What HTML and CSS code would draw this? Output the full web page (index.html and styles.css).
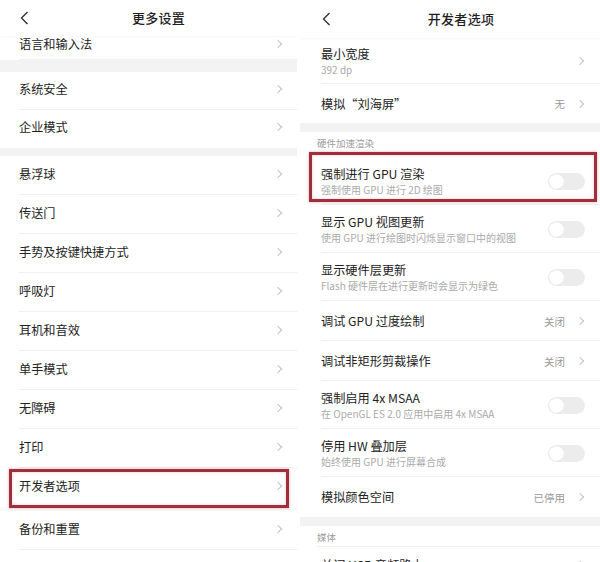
FILE: index.html
```html
<!DOCTYPE html>
<html lang="zh-CN">
<head>
<meta charset="utf-8">
<title>设置</title>
<link rel="stylesheet" href="styles.css">
</head>
<body>
<div class="screens">
  <section class="panel panel-left">
    <header class="bar">
      <svg class="back" width="9" height="14" viewBox="0 0 9 14"><path d="M7.5 1 L1.5 7 L7.5 13" fill="none" stroke="#333" stroke-width="1.4"/></svg>
      <h1 class="bar-title">更多设置</h1>
    </header>
    <div class="row row-partial"><span class="t">语言和输入法</span><i class="chev"></i></div>
    <div class="band band-12"></div>
    <div class="row row-38"><span class="t">系统安全</span><i class="chev"></i></div>
    <div class="row row-38 row-last"><span class="t">企业模式</span><i class="chev"></i></div>
    <div class="band band-8"></div>
    <div class="row"><span class="t">悬浮球</span><i class="chev"></i></div>
    <div class="row"><span class="t">传送门</span><i class="chev"></i></div>
    <div class="row"><span class="t">手势及按键快捷方式</span><i class="chev"></i></div>
    <div class="row"><span class="t">呼吸灯</span><i class="chev"></i></div>
    <div class="row"><span class="t">耳机和音效</span><i class="chev"></i></div>
    <div class="row"><span class="t">单手模式</span><i class="chev"></i></div>
    <div class="row"><span class="t">无障碍</span><i class="chev"></i></div>
    <div class="row"><span class="t">打印</span><i class="chev"></i></div>
    <div class="row row-last mark mark-left"><span class="t">开发者选项</span><i class="chev"></i></div>
    <div class="band band-4"></div>
    <div class="row"><span class="t">备份和重置</span><i class="chev"></i></div>
  </section>

  <section class="panel panel-right">
    <header class="bar bar-r">
      <svg class="back" width="9" height="14" viewBox="0 0 9 14"><path d="M7.5 1 L1.5 7 L7.5 13" fill="none" stroke="#333" stroke-width="1.4"/></svg>
      <h1 class="bar-title">开发者选项</h1>
    </header>
    <div class="row row-r row-46"><div class="stack"><span class="t">最小宽度</span><span class="s">392 dp</span></div><i class="chev"></i></div>
    <div class="row row-r row-39 row-last"><span class="t">模拟“刘海屏”</span><span class="val">无</span><i class="chev"></i></div>
    <div class="band band-9"></div>
    <div class="section section-top">硬件加速渲染</div>
    <div class="row row-r row-48 mark mark-right"><div class="stack"><span class="t">强制进行 GPU 渲染</span><span class="s">强制使用 GPU 进行 2D 绘图</span></div><span class="switch"></span></div>
    <div class="row row-r row-48"><div class="stack"><span class="t">显示 GPU 视图更新</span><span class="s">使用 GPU 进行绘图时闪烁显示窗口中的视图</span></div><span class="switch"></span></div>
    <div class="row row-r row-48"><div class="stack"><span class="t">显示硬件层更新</span><span class="s">Flash 硬件层在进行更新时会显示为绿色</span></div><span class="switch"></span></div>
    <div class="row row-r row-40"><span class="t">调试 GPU 过度绘制</span><span class="val">关闭</span><i class="chev"></i></div>
    <div class="row row-r row-40"><span class="t">调试非矩形剪裁操作</span><span class="val">关闭</span><i class="chev"></i></div>
    <div class="row row-r row-48"><div class="stack"><span class="t">强制启用 4x MSAA</span><span class="s">在 OpenGL ES 2.0 应用中启用 4x MSAA</span></div><span class="switch"></span></div>
    <div class="row row-r row-48"><div class="stack"><span class="t">停用 HW 叠加层</span><span class="s">始终使用 GPU 进行屏幕合成</span></div><span class="switch"></span></div>
    <div class="row row-r row-40 row-last"><span class="t">模拟颜色空间</span><span class="val">已停用</span><i class="chev"></i></div>
    <div class="band band-9"></div>
    <div class="section section-media">媒体</div>
    <div class="row row-r row-cut"><span class="t">关闭 USB 音频路由</span><i class="chev"></i></div>
  </section>
</div>
</body>
</html>
```

FILE: styles.css
```css
* { box-sizing: border-box; margin: 0; padding: 0; }

html, body {
  width: 600px;
  height: 562px;
  overflow: hidden;
  background: #ffffff;
}

body {
  font-family: "Noto Sans CJK SC", "Noto Sans", sans-serif;
  color: #222;
}

.screens {
  display: flex;
  gap: 3px;
  height: 562px;
}

.panel {
  display: flex;
  flex-direction: column;
  background: #fff;
  overflow: hidden;
}

.panel-left { width: 297px; flex: none; }
.panel-right { flex: 1; }

.bar {
  height: 36px;
  flex: none;
  display: grid;
  grid-template-columns: 1fr auto 1fr;
  align-items: center;
  padding: 0 0 0 20px;
  box-shadow: 0 1px 2px rgba(0,0,0,0.03);
  position: relative;
  z-index: 1;
}
.bar-r { height: 38px; padding-left: 22px; }

.back { grid-column: 1; justify-self: start; }

.bar-title {
  grid-column: 2;
  font-size: 13px;
  font-weight: 500;
  color: #1e1e1e;
  letter-spacing: 0.3px;
  line-height: 18px;
}

.row {
  flex: none;
  height: 39px;
  display: flex;
  align-items: center;
  padding: 0 14px 4px 19px;
  position: relative;
}
.row::before {
  content: "";
  position: absolute;
  left: 19px;
  right: 0;
  bottom: 0;
  height: 1px;
  background: #f0f0f0;
}
.row-last::before { display: none; }

.row-38 { height: 38px; }
.row-partial { height: 24px; padding-bottom: 8px; }

.row-r { padding: 0 15px 0 21px; }
.row-r::before { left: 21px; }
.row-46 { height: 46px; padding-bottom: 1px; }
.row-39 { height: 39px; }
.row-40 { height: 40px; }
.row-48 { height: 48px; }
.row-cut { height: 36px; }

.t {
  font-size: 12.2px;
  line-height: 16px;
  color: #222;
  flex: 1;
  white-space: nowrap;
}

.stack {
  flex: 1;
  display: flex;
  flex-direction: column;
  gap: 1px;
}
.stack .t { flex: none; }

.s {
  font-size: 10px;
  line-height: 13px;
  color: #aaa;
  white-space: nowrap;
}

.val {
  font-size: 10.5px;
  color: #9a9a9a;
  margin-right: 12px;
}

.chev {
  width: 6px;
  height: 6px;
  border-top: 1.2px solid #c4c4c4;
  border-right: 1.2px solid #c4c4c4;
  transform: rotate(45deg);
  margin-right: 2px;
  flex: none;
}

.switch {
  width: 37px;
  height: 17px;
  border-radius: 9px;
  background: #ececec;
  position: relative;
  flex: none;
}
.switch::after {
  content: "";
  position: absolute;
  left: 1px;
  top: 1px;
  width: 15px;
  height: 15px;
  border-radius: 50%;
  background: #fff;
  box-shadow: 0 0 1px rgba(0,0,0,0.12);
}

.band {
  flex: none;
  background: #f3f3f3;
}
.band-12 { height: 12px; }
.band-9 { height: 9px; }
.band-8 { height: 8px; }
.band-4 { height: 4px; background: #fafafa; }

.section {
  flex: none;
  font-size: 9.5px;
  color: #9d9d9d;
  padding-left: 17px;
  display: flex;
  align-items: center;
  position: relative;
}
.section-top { height: 25px; padding-bottom: 4px; }
.section-media { height: 21px; }
.section-media::after {
  content: "";
  position: absolute;
  left: 17px;
  right: 0;
  bottom: 0;
  height: 1px;
  background: #f0f0f0;
}

.mark::after {
  content: "";
  position: absolute;
  border: 3px solid #9e2f3c;
  box-shadow: 0 0 3px rgba(200, 70, 85, 0.45), inset 0 0 3px rgba(200, 70, 85, 0.35);
  pointer-events: none;
}
.mark-left::after { left: 9px; right: 8px; top: 1px; bottom: -1px; }
.mark-right::after { left: 9px; right: 3px; top: -5px; bottom: 3px; }
```
